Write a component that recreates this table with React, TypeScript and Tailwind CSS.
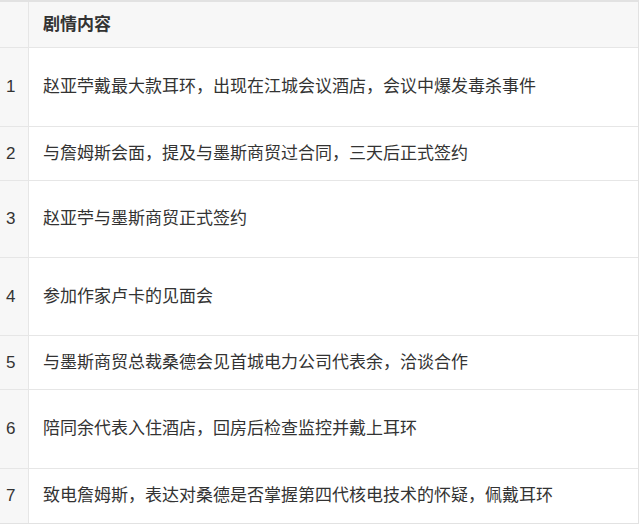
import React from "react";

const rows: { n: string; text: string; h: string }[] = [
  { n: "1", text: "赵亚苧戴最大款耳环，出现在江城会议酒店，会议中爆发毒杀事件", h: "h-[79px]" },
  { n: "2", text: "与詹姆斯会面，提及与墨斯商贸过合同，三天后正式签约", h: "h-[54px]" },
  { n: "3", text: "赵亚苧与墨斯商贸正式签约", h: "h-[77px]" },
  { n: "4", text: "参加作家卢卡的见面会", h: "h-[78px]" },
  { n: "5", text: "与墨斯商贸总裁桑德会见首城电力公司代表余，洽谈合作", h: "h-[54px]" },
  { n: "6", text: "陪同余代表入住酒店，回房后检查监控并戴上耳环", h: "h-[79px]" },
  { n: "7", text: "致电詹姆斯，表达对桑德是否掌握第四代核电技术的怀疑，佩戴耳环", h: "h-[54px]" },
];

export default function App() {
  return (
    <div
      className="w-[640px] h-[525px] bg-white overflow-hidden text-[#333333]"
      style={{ fontFamily: '"Liberation Sans", "Noto Sans CJK SC", sans-serif' }}
    >
      <div className="w-[639px] border-t-2 border-r border-b border-[#e2e2e2]">
        <div className="flex h-[46px] border-b border-[#e6e6e6] bg-[#f7f7f7]">
          <div className="w-[29px] shrink-0 border-r border-[#e6e6e6]" />
          <div className="flex-1 flex items-center pl-[14px] text-[17px] font-semibold">剧情内容</div>
        </div>
        {rows.map((r) => (
          <div key={r.n} className={`flex ${r.h} border-b border-[#e6e6e6] last:border-b-0`}>
            <div className="w-[29px] shrink-0 border-r border-[#e6e6e6] bg-[#f7f7f7] flex items-center pl-[6px] text-[17px]">
              {r.n}
            </div>
            <div className="flex-1 flex items-center pl-[14px] text-[17px] whitespace-nowrap">{r.text}</div>
          </div>
        ))}
      </div>
    </div>
  );
}
